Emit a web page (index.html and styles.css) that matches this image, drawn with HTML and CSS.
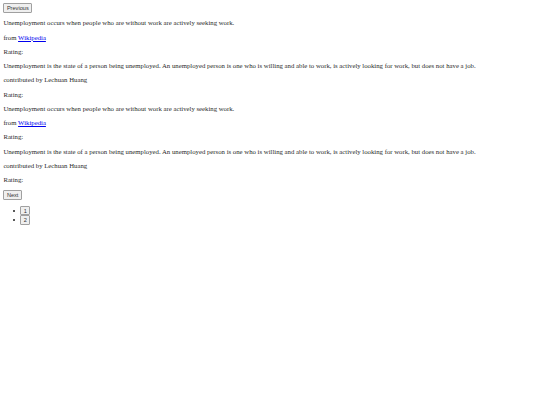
FILE: index.html
```html
<!DOCTYPE html>
<html>
<head>
<meta charset="utf-8">
<link rel="stylesheet" href="styles.css">
</head>
<body class="page">
<button class="btn">Previous</button>
<div class="list">
  <div class="quote">
    <p class="line">Unemployment occurs when people who are without work are actively seeking work.</p>
    <p class="line">from <a class="link" href="#">Wikipedia</a></p>
    <p class="line">Rating:</p>
  </div>
  <div class="quote">
    <p class="line">Unemployment is the state of a person being unemployed. An unemployed person is one who is willing and able to work, is actively looking for work, but does not have a job.</p>
    <p class="line">contributed by Lechuan Huang</p>
    <p class="line">Rating:</p>
  </div>
  <div class="quote">
    <p class="line">Unemployment occurs when people who are without work are actively seeking work.</p>
    <p class="line">from <a class="link" href="#">Wikipedia</a></p>
    <p class="line">Rating:</p>
  </div>
  <div class="quote">
    <p class="line">Unemployment is the state of a person being unemployed. An unemployed person is one who is willing and able to work, is actively looking for work, but does not have a job.</p>
    <p class="line">contributed by Lechuan Huang</p>
    <p class="line">Rating:</p>
  </div>
</div>
<button class="btn">Next</button>
<ul class="pages">
  <li class="page-item"><button class="btn">1</button></li>
  <li class="page-item"><button class="btn">2</button></li>
</ul>
</body>
</html>
```
FILE: styles.css
```css
html {
  background: #ffffff;
}
.page {
  margin: 3.375px;
  font-family: "Liberation Serif", "Times New Roman", serif;
  font-size: 6.75px;
  line-height: 7.5px;
  color: #2a2a2a;
}
.btn {
  font-family: "Liberation Sans", Arial, sans-serif;
  font-size: 5.625px;
  line-height: 6.4px;
  padding: 0.4px 2.5px;
  margin: 0;
  border: 1px solid #a0a0a0;
  border-radius: 1px;
  background: #efefef;
  color: #333333;
  vertical-align: top;
}
.line {
  margin: 6.75px 0;
}
.link {
  color: #0000ee;
  text-decoration: underline;
}
.pages {
  margin: 6.75px 0;
  padding-left: 16.875px;
  list-style: none;
}
.page-item {
  display: flex;
  align-items: center;
  height: 9.2px;
  margin-left: -7px;
}
.page-item::before {
  content: "";
  width: 2px;
  height: 2px;
  border-radius: 50%;
  background: #222222;
  margin-right: 5px;
}
```
